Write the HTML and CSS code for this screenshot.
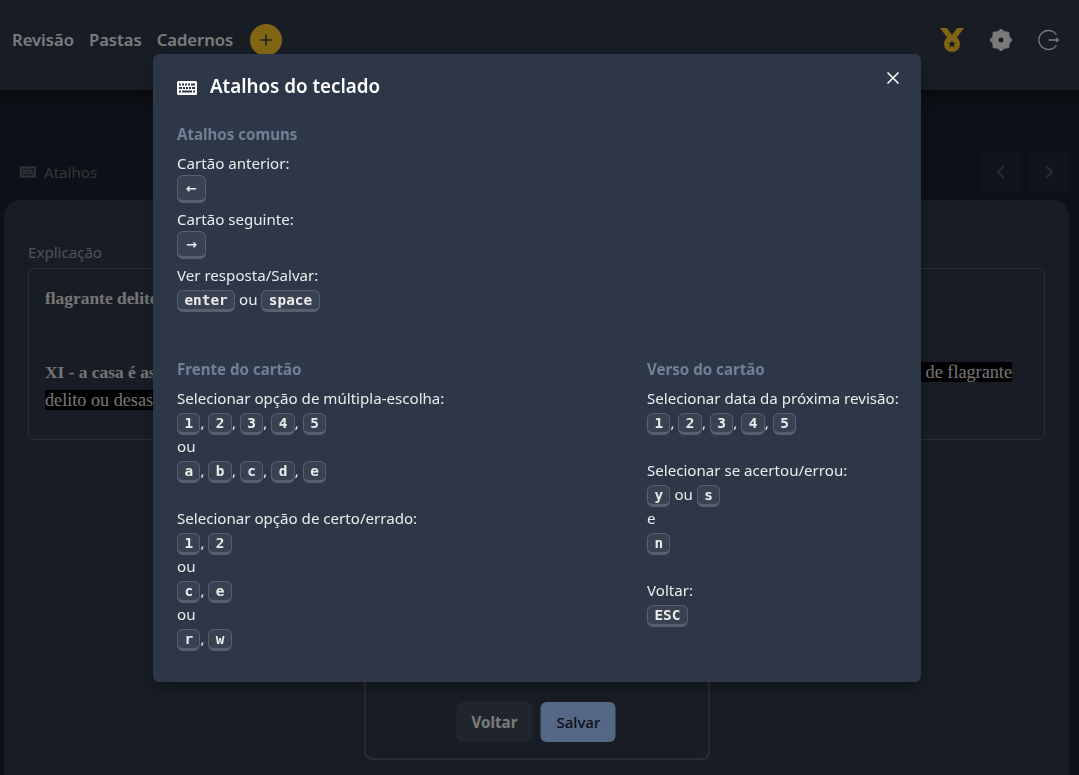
FILE: index.html
```html
<!DOCTYPE html>
<html lang="pt-BR">
<head>
<meta charset="utf-8">
<title>Atalhos do teclado</title>
<link rel="stylesheet" href="styles.css">
</head>
<body>
<svg class="defs" width="0" height="0" aria-hidden="true">
  <symbol id="kb" viewBox="0 0 20 14">
    <path fill-rule="evenodd" d="M1.500 0h17A1.500 1.500 0 0 1 20 1.500v11a1.500 1.500 0 0 1-1.500 1.500h-17A1.500 1.500 0 0 1 0 12.500v-11A1.500 1.500 0 0 1 1.500 0zM2 2.500v2h2v-2zM5 2.500v2h2v-2zM8 2.500v2h2v-2zM11 2.500v2h2v-2zM14 2.500v2h4v-2zM2 6v2h3V6zM6 6v2h2V6zM9 6v2h2V6zM12 6v2h2V6zM15 6v2h3V6zM2 9.500v2h2v-2zM5 9.500v2h10v-2zM16 9.500v2h2v-2z"/>
  </symbol>
</svg>

<header class="topbar">
  <nav class="nav">
    <a class="nav-link">Revisão</a>
    <a class="nav-link">Pastas</a>
    <a class="nav-link">Cadernos</a>
    <span class="add-btn"><svg width="14" height="14" viewBox="0 0 14 14"><path d="M7 1.500v11M1.500 7h11" stroke="currentColor" stroke-width="1.500" fill="none"/></svg></span>
  </nav>
  <div class="top-icons">
    <svg class="medal" width="24" height="24" viewBox="0 0 24 24">
      <path d="M0 0h7l5 7 5-7h7l-8 10.500H8z" fill="#f5c025"/>
      <circle cx="12" cy="16" r="8" fill="#f5c025"/>
      <path d="M12 12.200l1.100 2.500 2.700.2-2 1.800.6 2.700-2.400-1.400-2.400 1.400.6-2.700-2-1.800 2.700-.2z" fill="#2d3748"/>
    </svg>
    <svg class="gear" width="24" height="24" viewBox="0 0 24 24">
      <path fill-rule="evenodd" fill="#ebebeb" stroke="#ebebeb" stroke-width="1" stroke-linejoin="round" d="M23 12L20.130 15.370 19.780 19.780 15.370 20.130 12 23 8.630 20.130 4.220 19.780 3.870 15.370 1 12 3.870 8.630 4.220 4.220 8.630 3.870 12 1 15.370 3.870 19.780 4.220 20.130 8.630zM12 9a3 3 0 1 0 0 6 3 3 0 0 0 0-6z"/>
    </svg>
    <svg class="logout" width="22" height="22" viewBox="0 0 22 22" fill="none" stroke="#ebebeb" stroke-width="1.300">
      <path d="M18.500 6A9.500 9.500 0 1 0 18.500 16"/>
      <path d="M10.500 11H20.500M18 9l2.500 2-2.500 2"/>
    </svg>
  </div>
</header>

<main class="page">
  <div class="toolbar">
    <div class="shortcut-link"><svg class="shortcut-icon" width="16" height="12"><use href="#kb"/></svg>Atalhos</div>
    <div class="pager">
      <span class="pager-btn"><svg width="12" height="16" viewBox="0 0 12 16" fill="none" stroke="currentColor" stroke-width="2"><path d="M9 2L3 8l6 6"/></svg></span>
      <span class="pager-btn"><svg width="12" height="16" viewBox="0 0 12 16" fill="none" stroke="currentColor" stroke-width="2"><path d="M3 2l6 6-6 6"/></svg></span>
    </div>
  </div>
  <section class="card">
    <div class="field-label">Explicação</div>
    <div class="rich-box">
      <p class="rich-line rich-strong">flagrante delito</p>
      <p class="rich-line rich-gap"><strong class="rich-strong">XI - a casa é asilo inviolável do indivíduo,</strong> <span class="rich-plain">ninguém nela podendo penetrar sem consentimento do morador,</span> <mark class="mark">salvo em caso de flagrante<br>delito ou desastre, ou para prestar socorro, ou, durante o dia, por determinação judicial;</mark></p>
    </div>
    <div class="answer-box">
      <div class="actions">
        <button class="btn btn-back">Voltar</button>
        <button class="btn btn-save">Salvar</button>
      </div>
    </div>
  </section>
</main>

<div class="overlay">
  <div class="modal">
    <button class="close" aria-label="Fechar"><svg width="12" height="12" viewBox="0 0 12 12" stroke="currentColor" stroke-width="1.500" fill="none"><path d="M.5.500l11 11M11.500.500l-11 11"/></svg></button>
    <h2 class="modal-title"><svg class="title-icon" width="20" height="14"><use href="#kb"/></svg>Atalhos do teclado</h2>
    <div class="modal-body">
      <h3 class="section-title">Atalhos comuns</h3>
      <div class="row">Cartão anterior:<br><kbd class="kbd kbd-arrow">←</kbd></div>
      <div class="row">Cartão seguinte:<br><kbd class="kbd kbd-arrow">→</kbd></div>
      <div class="row">Ver resposta/Salvar:<br><kbd class="kbd">enter</kbd> ou <kbd class="kbd">space</kbd></div>

      <div class="columns">
        <div>
          <h3 class="section-title">Frente do cartão</h3>
          <div>Selecionar opção de múltipla-escolha:<br>
            <kbd class="kbd">1</kbd>, <kbd class="kbd">2</kbd>, <kbd class="kbd">3</kbd>, <kbd class="kbd">4</kbd>, <kbd class="kbd">5</kbd><br>
            ou<br>
            <kbd class="kbd">a</kbd>, <kbd class="kbd">b</kbd>, <kbd class="kbd">c</kbd>, <kbd class="kbd">d</kbd>, <kbd class="kbd">e</kbd><br><br>
            Selecionar opção de certo/errado:<br>
            <kbd class="kbd">1</kbd>, <kbd class="kbd">2</kbd><br>
            ou<br>
            <kbd class="kbd">c</kbd>, <kbd class="kbd">e</kbd><br>
            ou<br>
            <kbd class="kbd">r</kbd>, <kbd class="kbd">w</kbd>
          </div>
        </div>
        <div>
          <h3 class="section-title">Verso do cartão</h3>
          <div>Selecionar data da próxima revisão:<br>
            <kbd class="kbd">1</kbd>, <kbd class="kbd">2</kbd>, <kbd class="kbd">3</kbd>, <kbd class="kbd">4</kbd>, <kbd class="kbd">5</kbd><br><br>
            Selecionar se acertou/errou:<br>
            <kbd class="kbd">y</kbd> ou <kbd class="kbd">s</kbd><br>
            e<br>
            <kbd class="kbd">n</kbd><br><br>
            Voltar:<br>
            <kbd class="kbd">ESC</kbd>
          </div>
        </div>
      </div>
    </div>
  </div>
</div>
</body>
</html>
```
FILE: styles.css
```css
* { box-sizing: border-box; }
html, body { margin: 0; height: 775px; overflow: hidden; }
body {
  background: #1a202c;
  color: #ebebeb;
  font-family: "Noto Sans", "Open Sans", sans-serif;
  font-size: 15.1px;
  line-height: 24px;
}
.defs { position: absolute; }

.topbar {
  height: 90px;
  background: #2d3748;
  box-shadow: 0 4px 12px rgba(0,0,0,.5);
  display: flex;
  align-items: center;
  justify-content: space-between;
  padding: 0 19px 10px 12px;
  position: relative;
}
.nav { display: flex; align-items: center; gap: 15px; }
.nav-link { font-size: 16.6px; font-weight: 600; color: #ebebeb; }
.add-btn {
  width: 32px; height: 32px; border-radius: 50%;
  margin-left: 2px;
  background: #f5c025; color: #2d3748;
  display: flex; align-items: center; justify-content: center;
}
.top-icons { display: flex; align-items: center; gap: 25px; }

.page { padding: 0 10px 0 4px; }
.toolbar {
  height: 110px;
  padding: 62px 0 8px 16px;
  display: flex;
  justify-content: space-between;
  align-items: center;
}
.shortcut-link { display: flex; align-items: center; gap: 8px; color: #ebebeb; opacity: .35; }
.shortcut-icon { fill: currentColor; }
.pager { display: flex; gap: 8px; }
.pager-btn {
  width: 40px; height: 40px; border-radius: 6px;
  background: rgba(255,255,255,.04);
  color: rgba(255,255,255,.2);
  display: flex; align-items: center; justify-content: center;
}

.card {
  background: #2d3748;
  border-radius: 16px 16px 0 0;
  height: 575px;
  padding: 40px 24px 0;
}
.field-label { color: rgba(255,255,255,.5); margin-bottom: 4px; }
.rich-box {
  height: 172px;
  border: 1px solid rgba(255,255,255,.16);
  border-radius: 6px;
  padding: 15px 16px;
  font-family: "Liberation Serif", serif;
  font-size: 18.2px;
  line-height: 28px;
  color: #e0e0e0;
  overflow: hidden;
}
.rich-line { margin: 0; white-space: nowrap; }
.rich-strong { font-weight: 700; font-size: 17.4px; }
.rich-plain { font-size: 17.85px; }
.rich-gap { margin-top: 46px; }
.mark { background: #000; color: #e0e0e0; }

.answer-box {
  width: 346px;
  height: 320px;
  margin: 0 auto;
  border: 2px solid rgba(255,255,255,.16);
  border-radius: 8px;
  display: flex;
  align-items: flex-end;
  justify-content: center;
  padding-bottom: 16px;
}
.actions { display: flex; gap: 8px; transform: translateX(-.5px); }
.btn {
  height: 40px; border: 0; border-radius: 6px; padding: 0 15.5px;
  font: 700 15.1px/24px "Noto Sans", sans-serif;
}
.btn-back { background: rgba(255,255,255,.08); color: #ebebeb; }
.btn-save { background: #a1c8ff; color: #1a202c; font-weight: 500; }

.overlay {
  position: fixed;
  inset: 0;
  background: rgba(0,0,0,.48);
  display: flex;
  justify-content: center;
  align-items: flex-start;
  padding: 54px 5px 0 0;
}
.modal {
  position: relative;
  width: 768px;
  height: 628px;
  background: #2d3748;
  border-radius: 6px;
  box-shadow: 0 7px 14px rgba(0,0,0,.25);
  padding: 17px 10px 0 24px;
}
.close {
  position: absolute;
  top: 18px; right: 22px;
  width: 12px; height: 12px; padding: 0;
  background: none; border: 0; color: #fff;
  display: flex;
}
.modal-title {
  margin: 0 0 21px;
  font-size: 18.8px;
  line-height: 30px;
  font-weight: 600;
  color: #fff;
  display: flex;
  align-items: center;
  gap: 13px;
}
.title-icon { fill: #fff; margin-top: 3px; }
.section-title {
  margin: 0 0 5px;
  font-size: 15.1px;
  line-height: 24px;
  font-weight: 700;
  color: #718096;
}
.row { margin-bottom: 8px; }
.columns {
  display: grid;
  grid-template-columns: 470px 1fr;
  margin-top: 46px;
}
.kbd {
  display: inline;
  font-family: "DejaVu Sans Mono", monospace;
  font-weight: 700;
  font-size: 14.4px;
  line-height: 14px;
  color: #ebebeb;
  background: rgba(255,255,255,.06);
  border: 1px solid rgba(255,255,255,.16);
  border-bottom-width: 3px;
  border-radius: 6px;
  padding: 1px 6.4px;
}
.kbd-arrow {
  font-family: "DejaVu Sans", sans-serif;
  font-size: 13px;
  padding: 5px 8px 4px;
}
```
